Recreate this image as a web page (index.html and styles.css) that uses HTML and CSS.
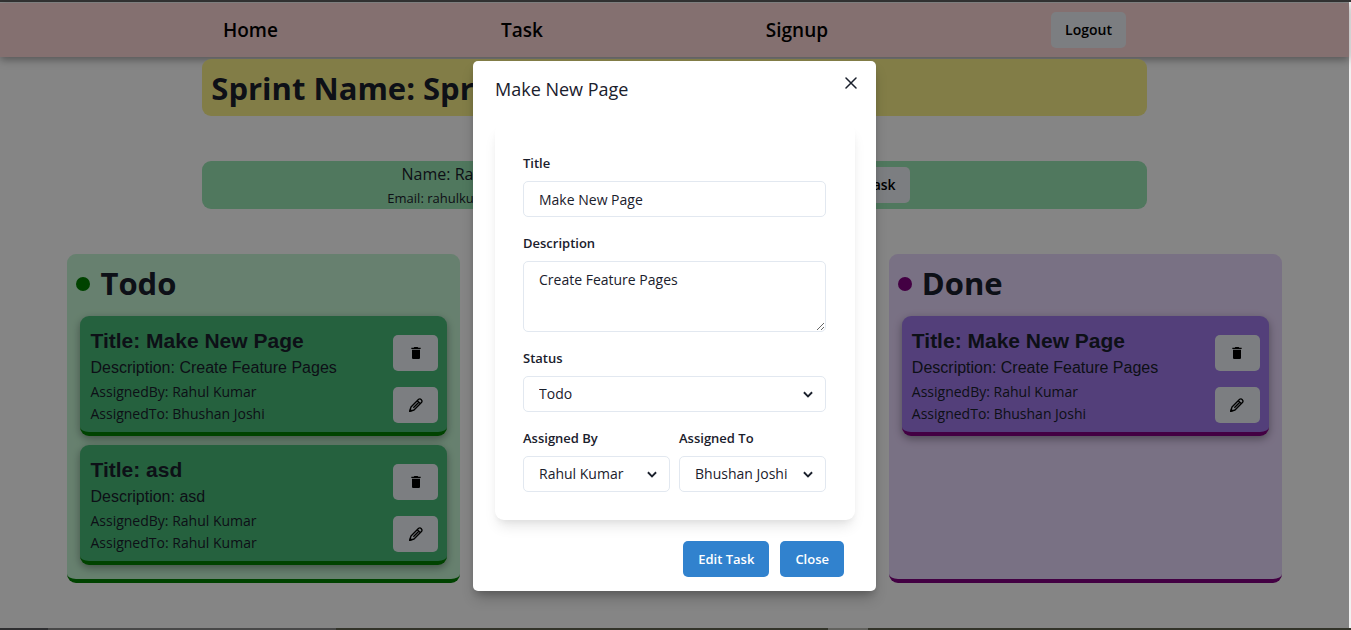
FILE: index.html
```html
<!DOCTYPE html>
<html lang="en">
<head>
<meta charset="utf-8">
<title>Sprint board</title>
<link rel="stylesheet" href="styles.css">
</head>
<body>
<svg class="sprite" aria-hidden="true">
  <symbol id="trash" viewBox="0 0 24 24"><path d="M6 19c0 1.100.9 2 2 2h8c1.100 0 2-.9 2-2V7H6v12zM19 4h-3.500l-1-1h-5l-1 1H5v2h14V4z" fill="currentColor"/></symbol>
  <symbol id="pencil" viewBox="0 0 24 24"><path d="M2.500 21.500l2-6.500L16 3.500q2-1.500 4 .5t.5 4L9 19.500zM14 5.500l4.500 4.500M8 16l7.500-7.500" fill="none" stroke="currentColor" stroke-width="2" stroke-linejoin="round"/><path d="M1.500 22.500l1.500-5.500 4 4z" fill="currentColor"/></symbol>
</svg>
<div class="page">
  <header class="nav">
    <a class="nav-link" href="#">Home</a>
    <a class="nav-link" href="#">Task</a>
    <a class="nav-link" href="#">Signup</a>
    <button class="btn" type="button">Logout</button>
  </header>
  <main>
    <h1 class="sprint">Sprint Name: Sprint 1</h1>
    <section class="user">
      <div class="user-info">
        <p class="user-name">Name: Rahul Kumar</p>
        <p class="user-mail">Email: rahulkumar@mail.com</p>
      </div>
      <button class="btn" type="button">Add Task</button>
    </section>
    <div class="board">
      <section class="column todo">
        <h2 class="column-title">Todo</h2>
        <article class="task">
          <div class="task-text">
            <h3 class="task-title">Title: Make New Page</h3>
            <p class="task-desc">Description: Create Feature Pages</p>
            <p class="task-meta">AssignedBy: Rahul Kumar</p>
            <p class="task-meta">AssignedTo: Bhushan Joshi</p>
          </div>
          <div class="task-actions">
            <button class="btn icon-btn" type="button" aria-label="Delete"><svg class="icon"><use href="#trash"/></svg></button>
            <button class="btn icon-btn" type="button" aria-label="Edit"><svg class="icon"><use href="#pencil"/></svg></button>
          </div>
        </article>
        <article class="task">
          <div class="task-text">
            <h3 class="task-title">Title: asd</h3>
            <p class="task-desc">Description: asd</p>
            <p class="task-meta">AssignedBy: Rahul Kumar</p>
            <p class="task-meta">AssignedTo: Rahul Kumar</p>
          </div>
          <div class="task-actions">
            <button class="btn icon-btn" type="button" aria-label="Delete"><svg class="icon"><use href="#trash"/></svg></button>
            <button class="btn icon-btn" type="button" aria-label="Edit"><svg class="icon"><use href="#pencil"/></svg></button>
          </div>
        </article>
      </section>
      <section class="column done">
        <h2 class="column-title">Done</h2>
        <article class="task">
          <div class="task-text">
            <h3 class="task-title">Title: Make New Page</h3>
            <p class="task-desc">Description: Create Feature Pages</p>
            <p class="task-meta">AssignedBy: Rahul Kumar</p>
            <p class="task-meta">AssignedTo: Bhushan Joshi</p>
          </div>
          <div class="task-actions">
            <button class="btn icon-btn" type="button" aria-label="Delete"><svg class="icon"><use href="#trash"/></svg></button>
            <button class="btn icon-btn" type="button" aria-label="Edit"><svg class="icon"><use href="#pencil"/></svg></button>
          </div>
        </article>
      </section>
    </div>
  </main>
  <div class="overlay">
    <div class="modal" role="dialog" aria-modal="true" aria-labelledby="modal-title">
      <div class="modal-head">
        <h2 class="modal-title" id="modal-title">Make New Page</h2>
        <button class="close" type="button" aria-label="Close dialog"><svg class="close-icon" viewBox="0 0 12 12"><path d="M1 1l10 10M11 1L1 11" fill="none" stroke="currentColor" stroke-width="1.500" stroke-linecap="round"/></svg></button>
      </div>
      <form class="form">
        <div class="field">
          <label class="label" for="title">Title</label>
          <input class="control" id="title" type="text" value="Make New Page">
        </div>
        <div class="field">
          <label class="label" for="description">Description</label>
          <textarea class="control area" id="description">Create Feature Pages</textarea>
        </div>
        <div class="field">
          <label class="label" for="status">Status</label>
          <div class="select">
            <select class="control" id="status"><option>Todo</option><option>Done</option></select>
            <svg class="chevron" viewBox="0 0 12 12"><path d="M2.500 4.500L6 8l3.500-3.500" fill="none" stroke="currentColor" stroke-width="1.600"/></svg>
          </div>
        </div>
        <div class="pair">
          <div class="field">
            <label class="label" for="by">Assigned By</label>
            <div class="select">
              <select class="control" id="by"><option>Rahul Kumar</option><option>Bhushan Joshi</option></select>
              <svg class="chevron" viewBox="0 0 12 12"><path d="M2.500 4.500L6 8l3.500-3.500" fill="none" stroke="currentColor" stroke-width="1.600"/></svg>
            </div>
          </div>
          <div class="field">
            <label class="label" for="to">Assigned To</label>
            <div class="select">
              <select class="control" id="to"><option>Bhushan Joshi</option><option>Rahul Kumar</option></select>
              <svg class="chevron" viewBox="0 0 12 12"><path d="M2.500 4.500L6 8l3.500-3.500" fill="none" stroke="currentColor" stroke-width="1.600"/></svg>
            </div>
          </div>
        </div>
      </form>
      <div class="modal-foot">
        <button class="btn primary" type="button">Edit Task</button>
        <button class="btn primary" type="button">Close</button>
      </div>
    </div>
  </div>
</div>
</body>
</html>
```
FILE: styles.css
```css
* { box-sizing: border-box; margin: 0; }

body {
  min-height: 100vh;
  display: flex;
  padding: 2px 2px 2px 0;
  background:
    linear-gradient(#333 0 0) top / 100% 2px no-repeat,
    linear-gradient(90deg, #2f2f31 48px, #484848 48px 336px, #33342a 336px 828px, #62625e 828px 868px, #33342a 868px) bottom / 100% 2px no-repeat,
    #f1f1f1;
  color: #1a202c;
  font: 14px/22px "Segoe UI", "Open Sans", sans-serif;
}

.sprite { position: absolute; width: 0; height: 0; }

.page {
  position: relative;
  flex: 1;
  background: #fff;
  border-top: 1px solid #888;
}

.nav {
  display: flex;
  justify-content: space-evenly;
  align-items: center;
  height: 54px;
  background: #fed7d7;
  box-shadow: 0 3px 8px rgba(0, 0, 0, .35);
}

.nav-link {
  color: #000;
  font-size: 19px;
  font-weight: 600;
  text-decoration: none;
}

.btn {
  height: 36px;
  padding: 0 14px;
  border: 0;
  border-radius: 5px;
  background: #edf2f7;
  color: #000;
  font: inherit;
  font-weight: 600;
}

.sprint {
  width: 70%;
  margin: 2px auto 0;
  padding: 5px 9px 3px;
  border-radius: 9px;
  background: #faf089;
  font-size: 31px;
  line-height: 49px;
  font-weight: 700;
}

.user {
  display: flex;
  justify-content: space-between;
  align-items: center;
  width: 70%;
  height: 48px;
  margin: 45px auto;
  padding: 0 237px 0 185px;
  border-radius: 9px;
  background: #9ae6b4;
}

.user-info { text-align: center; }
.user-name { font-size: 16px; line-height: 27px; font-weight: 500; }
.user-mail { font-size: 13px; line-height: 21px; }

.board {
  display: grid;
  grid-template-columns: repeat(3, 1fr);
  gap: 18px;
  width: 90%;
  margin: 0 auto;
}

.column {
  padding: 5px 13px 14px;
  border-radius: 9px;
  border-bottom: 4px solid var(--accent);
  background: var(--tint);
}

.todo { --accent: green; --tint: #c6f6d5; --card: #48bb78; }
.done { --accent: purple; --tint: #e9d8fd; --card: #9f7aea; grid-column: 3; }

.column-title {
  display: flex;
  align-items: center;
  gap: 10px;
  margin: 0 -4px 8px;
  font-size: 31px;
  line-height: 49px;
}

.column-title::before {
  content: "";
  width: 14px;
  height: 14px;
  border-radius: 50%;
  background: var(--accent);
}

.task {
  display: flex;
  justify-content: space-between;
  height: 120px;
  padding: 10px 9px 0 10px;
  border-radius: 9px;
  border-bottom: 4px solid var(--accent);
  background: var(--card);
  box-shadow: 0 3px 8px rgba(0, 0, 0, .35);
}

.task + .task { margin-top: 9px; }

.task-title { font: bold 21px/29px "Liberation Sans", Arial, sans-serif; }
.task-desc { font: 16px/26px "Liberation Sans", Arial, sans-serif; }
.task-meta { font-size: 14px; line-height: 22px; }

.task-actions { display: flex; flex-direction: column; gap: 16px; margin-top: 9px; }
.icon-btn { display: grid; place-items: center; width: 45px; padding: 0; }
.icon { width: 16px; height: 16px; }

.overlay {
  position: absolute;
  inset: 0;
  display: flex;
  justify-content: center;
  align-items: flex-start;
  padding-top: 58px;
  background: rgba(0, 0, 0, .48);
}

.modal {
  width: 403px;
  padding: 14px 21px 14px 22px;
  border-radius: 5px;
  background: #fff;
  box-shadow: 0 9px 14px -3px rgba(0, 0, 0, .25), 0 4px 6px -2px rgba(0, 0, 0, .15);
}

.modal-head {
  display: flex;
  justify-content: space-between;
  align-items: flex-start;
}

.modal-title { font-size: 18px; line-height: 28px; font-weight: 500; }

.close {
  display: grid;
  place-items: center;
  width: 28px;
  height: 28px;
  margin: -6px -10px 0 0;
  padding: 0;
  border: 0;
  background: none;
  color: inherit;
}

.close-icon { width: 12px; height: 12px; }

.form {
  display: grid;
  gap: 15px;
  margin-top: 21px;
  padding: 28px 29px 28px 28px;
  border-radius: 9px;
  box-shadow: 0 9px 14px -3px rgba(0, 0, 0, .1), 0 4px 6px -2px rgba(0, 0, 0, .05);
}

.field { display: grid; gap: 7px; }
.label { font-size: 13px; font-weight: 600; }

.control {
  display: block;
  width: 100%;
  height: 36px;
  padding: 0 15px;
  border: 1px solid #e2e8f0;
  border-radius: 5px;
  background: #fff;
  color: inherit;
  font: inherit;
  appearance: none;
}

.area { height: 71px; padding: 7px 15px; resize: vertical; }

.select { display: grid; align-items: center; }
.select > * { grid-area: 1 / 1; }
.chevron { justify-self: end; width: 14px; height: 14px; margin-right: 11px; pointer-events: none; }

.pair { display: grid; grid-template-columns: 1fr 1fr; gap: 9px; }

.modal-foot {
  display: flex;
  justify-content: flex-end;
  gap: 11px;
  padding: 21px 11px 0 0;
}

.primary { padding: 0 15px; background: #3182ce; color: #fff; font-size: 13px; font-weight: 600; }
```
